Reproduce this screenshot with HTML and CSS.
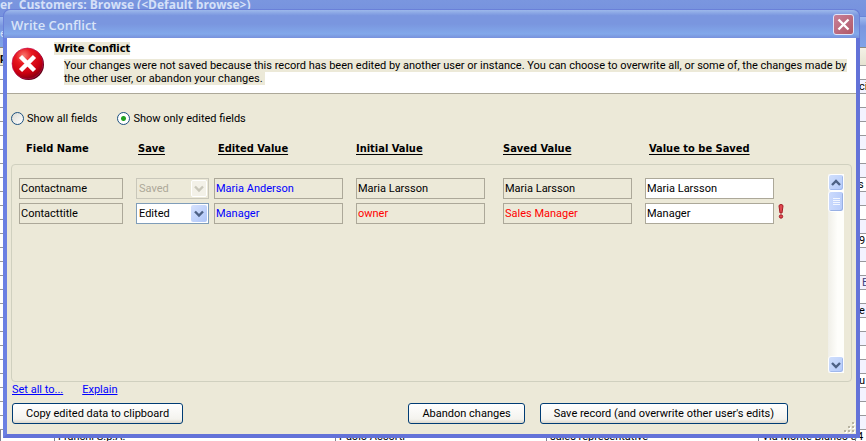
FILE: index.html
```html
<!DOCTYPE html>
<html lang="en">
<head>
<meta charset="utf-8">
<title>Write Conflict</title>
<link rel="stylesheet" href="styles.css">
</head>
<body>
<div class="app">
  <div class="app-title">er&nbsp; Customers: Browse (&lt;Default browse&gt;)</div>
  <div class="app-tools">e</div>
  <div class="sheet">
    <div class="sheet-head">p</div>
    <div class="line"></div>
    <div class="line"><span class="tail">ci</span></div>
    <div class="line"></div>
    <div class="line"></div>
    <div class="line"></div>
    <div class="line"></div>
    <div class="line"></div>
    <div class="line"></div>
    <div class="line"><span class="tail tail-near">s</span></div>
    <div class="line"></div>
    <div class="line"></div>
    <div class="line"></div>
    <div class="line"><span class="tail">9</span></div>
    <div class="line"></div>
    <div class="line"></div>
    <div class="line"><span class="tail tail-far">E</span></div>
    <div class="line"></div>
    <div class="line"><span class="tail">e</span></div>
    <div class="line"></div>
    <div class="line"></div>
    <div class="line"></div>
    <div class="line"></div>
    <div class="line"><span class="tail">u</span></div>
    <div class="line"></div>
    <div class="line"></div>
    <div class="line"></div>
    <div class="line customer"><span></span><span>Franchi S.p.A.</span><span>Paolo Accorti</span><span>sales representative</span><span>Via Monte Bianco 34</span><span></span></div>
  </div>
</div>

<section class="dialog" role="dialog" aria-labelledby="dialog-title">
  <header class="titlebar">
    <h1 id="dialog-title">Write Conflict</h1>
    <button class="close" type="button" aria-label="Close">
      <svg viewBox="0 0 19 19" width="19" height="19"><path d="M4.500 4.500L14.500 14.500M14.500 4.500L4.500 14.500" stroke="#fff" stroke-width="2.400"/></svg>
    </button>
  </header>

  <div class="message">
    <svg class="stop" viewBox="0 0 34 34" width="34" height="34" aria-hidden="true">
      <defs><radialGradient id="ball" cx=".38" cy=".25" r=".75"><stop offset="0" stop-color="#f87a70"/><stop offset=".35" stop-color="#e81820"/><stop offset=".75" stop-color="#cc0010"/><stop offset="1" stop-color="#8a0010"/></radialGradient></defs>
      <circle cx="17.500" cy="17.500" r="15.500" fill="#600010"/>
      <circle cx="16.500" cy="16.500" r="15.500" fill="url(#ball)" stroke="#c01060" stroke-width=".6"/>
      <path d="M9.500 9.500L23.500 23.500M23.500 9.500L9.500 23.500" stroke="#fff" stroke-width="4.500"/>
    </svg>
    <div class="message-text">
      <h2><span class="mark">Write Conflict</span></h2>
      <p><span class="mark">Your changes were not saved because this record has been edited by another user or instance. You can choose to overwrite all, or some of, the changes made by<br>the other user, or abandon your changes.&nbsp; </span></p>
    </div>
  </div>

  <form class="content">
    <div class="filters">
      <label><input type="radio" name="show">Show all fields</label>
      <label><input type="radio" name="show" checked>Show only edited fields</label>
    </div>

    <div class="records">
      <table>
        <thead>
          <tr><th>Field Name</th><th><u>Save</u></th><th><u>Edited Value</u></th><th><u>Initial Value</u></th><th><u>Saved Value</u></th><th><u>Value to be Saved</u></th><th></th></tr>
        </thead>
        <tbody>
          <tr>
            <td><input aria-label="Field name" value="Contactname" readonly></td>
            <td><div class="pick off"><select aria-label="Save Contactname" disabled><option>Saved</option></select><svg viewBox="0 0 16 17" width="16" height="17"><path d="M4 6.500L8 10.500L12 6.500"/></svg></div></td>
            <td><input class="edited" aria-label="Edited value" value="Maria Anderson" readonly></td>
            <td><input aria-label="Initial value" value="Maria Larsson" readonly></td>
            <td><input aria-label="Saved value" value="Maria Larsson" readonly></td>
            <td><input class="open" aria-label="Value to be saved" value="Maria Larsson"></td>
            <td></td>
          </tr>
          <tr>
            <td><input aria-label="Field name" value="Contacttitle" readonly></td>
            <td><div class="pick"><select aria-label="Save Contacttitle"><option>Edited</option><option>Saved</option></select><svg viewBox="0 0 16 17" width="16" height="17"><path d="M4 6.500L8 10.500L12 6.500"/></svg></div></td>
            <td><input class="edited" aria-label="Edited value" value="Manager" readonly></td>
            <td><input class="differs" aria-label="Initial value" value="owner" readonly></td>
            <td><input class="differs" aria-label="Saved value" value="Sales Manager" readonly></td>
            <td><input class="open" aria-label="Value to be saved" value="Manager"></td>
            <td><svg class="alert" viewBox="0 0 6 15" width="6" height="15"><path d="M1 2Q1 .5 3 .5T5 2L4 9H2Z" fill="#e04850" stroke="#a41c24"/><circle cx="3" cy="12.500" r="1.700" fill="#e04850" stroke="#a41c24"/></svg></td>
          </tr>
        </tbody>
      </table>
      <div class="scroll">
        <button type="button" aria-label="Scroll up"><svg viewBox="0 0 14 14" width="14" height="14"><path d="M3 9L7 5L11 9"/></svg></button>
        <div class="thumb"><i></i><i></i><i></i><i></i></div>
        <button class="down" type="button" aria-label="Scroll down"><svg viewBox="0 0 14 14" width="14" height="14"><path d="M3 5L7 9L11 5"/></svg></button>
      </div>
    </div>

    <div class="links"><a href="#set">Set all to...</a><a href="#explain">Explain</a></div>

    <div class="actions">
      <button class="copy" type="button">Copy edited data to clipboard</button>
      <button class="abandon" type="button">Abandon changes</button>
      <button class="save" type="button">Save record (and overwrite other user's edits)</button>
    </div>
  </form>
  <svg class="grip" viewBox="0 0 12 12" width="12" height="12"><path d="M9 1h2v2h-2zM9 5h2v2h-2zM9 9h2v2h-2zM5 5h2v2h-2zM5 9h2v2h-2zM1 9h2v2h-2z" fill="#fff"/><path d="M8 0h2v2h-2zM8 4h2v2h-2zM8 8h2v2h-2zM4 4h2v2h-2zM4 8h2v2h-2zM0 8h2v2h-2z" fill="#b8b4a2"/></svg>
</section>
</body>
</html>
```
FILE: styles.css
```css
* { box-sizing: border-box; }

body {
  margin: 0;
  height: 100vh;
  overflow: hidden;
  position: relative;
  font: 11px/13px Roboto, sans-serif;
  color: #000;
  background: #fff;
}

button, input, select { font: inherit; color: inherit; margin: 0; }

/* window behind the dialog */
.app { height: 100%; overflow: hidden; }

.app-title {
  height: 17px;
  font: bold 12px/10px "Open Sans", sans-serif;
  color: #d5e0f8;
  background: linear-gradient(#7a96df, #7691de);
  border-bottom: 1px solid #6a86d8;
  white-space: nowrap;
}

.app-tools {
  height: 30px;
  padding-top: 10px;
  color: #d5e0f8;
  background: linear-gradient(#a0bcf0, #7a96df 30%, #7fa3e8);
}

.sheet-head {
  height: 19px;
  padding-top: 3px;
  font-weight: bold;
  background: linear-gradient(#f4f2e6, #e6e3d2);
  border-top: 1px solid #8c8a80;
  border-bottom: 1px solid #a0a0a0;
}

.line {
  height: 14px;
  display: flex;
  border-bottom: 1px solid #98989c;
  white-space: nowrap;
}

.line:nth-child(odd) { background: linear-gradient(90deg, #fff 50%, #f3f3ff 50%); }

.tail { margin-left: auto; width: 7px; }
.tail-near { width: 8px; }
.tail-far { color: #404080; width: 4px; }

.customer { display: grid; grid-template-columns: 54fr 281fr 211fr 212fr 97fr 11fr; }
.customer span { min-width: 0; padding-left: 3px; border-left: 1px solid #808090; }

/* dialog */
.dialog {
  position: absolute;
  inset: 9px 6px 3px 3px;
  display: flex;
  flex-direction: column;
  border: 4px solid #6b80e2;
  border-top: 0;
  border-right-color: #6372d8;
  border-bottom-color: #6372d8;
  border-radius: 7px 7px 0 0;
  background: #ece9d8;
}

.titlebar {
  height: 29px;
  flex: none;
  margin: 0 -4px;
  padding: 0 5px 0 7px;
  display: flex;
  align-items: center;
  justify-content: space-between;
  border: 1px solid #6a80d8;
  border-bottom: 0;
  border-radius: 7px 7px 0 0;
  background: linear-gradient(#9db9eb, #7a96df 20%, #7a96df 50%, #82a8ea 85%, #7891dc);
}

h1 {
  margin: 2px 0 0;
  font: 600 13px/18px "Open Sans", sans-serif;
  color: #d8e4f8;
}

.close {
  width: 21px;
  height: 21px;
  padding: 0;
  display: grid;
  place-items: center;
  border: 1px solid #e0e4f8;
  border-radius: 3px;
  background: linear-gradient(135deg, #c88098, #b05868);
}

.message {
  height: 56px;
  flex: none;
  display: flex;
  background: #fff;
  border-bottom: 1px solid #aca899;
}

.stop { flex: none; margin: 9px 0 0 4px; }
.message-text { padding: 4px 0 0 9px; white-space: nowrap; }
h2 { margin: 0; font: bold 11px/14px "DejaVu Sans Condensed", sans-serif; }
p { margin: 3px 0 0 10px; line-height: 13px; }
.mark { background: #ece9d8; }

.content {
  flex: 1;
  display: flex;
  flex-direction: column;
  padding: 17px 4px 10px;
}

.filters { display: flex; gap: 20px; }
.filters label { display: flex; align-items: center; gap: 3px; height: 14px; }

input[type="radio"] {
  appearance: none;
  width: 13px;
  height: 13px;
  border: 1px solid #1c5180;
  border-radius: 50%;
  background: linear-gradient(135deg, #dcdcd4, #fff);
}

input[type="radio"]:checked { background: radial-gradient(circle, #21a121 0 2px, #fff 3px); }

.records {
  flex: 1;
  position: relative;
  display: flex;
  gap: 9px;
  padding: 15px 8px 9px 8px;
}

.records::before {
  content: "";
  position: absolute;
  inset: 39px 0 0 0;
  border: 1px solid #d0d0bf;
  border-radius: 4px;
  pointer-events: none;
}

table { flex: 1; display: block; }
thead, tbody { display: block; }
tr { display: grid; grid-template-columns: 117fr 78fr 142fr 147fr 142fr 129fr 45fr; }
thead { height: 38px; }
tbody tr { height: 25px; }

th {
  padding: 2px 0 0 4px;
  font: bold 11px/14px "DejaVu Sans Condensed", sans-serif;
  text-align: left;
  white-space: nowrap;
}
th:first-child { padding-left: 7px; }
th:nth-child(2) { padding-left: 2px; }
th:nth-child(4), th:nth-child(5) { padding-left: 0; }
u { text-underline-offset: 2px; }

td { padding: 0 13px 0 0; }
td:nth-child(2) { padding-right: 5px; }
td:nth-child(4) { padding-right: 18px; }
td:nth-child(6) { padding: 0; }
td:nth-child(7) { padding: 1px 0 0 4px; }

td input {
  display: block;
  width: 100%;
  height: 21px;
  padding: 1px;
  border: 1px solid #aca899;
  background: #ece9d8;
}

td .open { background: #fff; }
.edited { color: #00f; }
.differs { color: #f00; }

.pick { display: grid; height: 21px; border: 1px solid #7f9db9; background: #fff; }
.pick select, .pick svg { grid-area: 1 / 1; }
.pick select { appearance: none; width: 100%; padding: 0 2px; border: 0; background: none; }
.pick svg {
  justify-self: end;
  align-self: center;
  margin-right: 1px;
  border-radius: 2px;
  background: linear-gradient(135deg, #d6e2fd, #aec5f8);
  pointer-events: none;
}
.pick path, .scroll path { fill: none; stroke: #4d6185; stroke-width: 2.4; }
.off { border-color: #c9c7ba; background: #ece9d8; }
.off select { color: #aca899; opacity: 1; }
.off svg { background: #f3f1e8; outline: 1px solid #fff; outline-offset: -1px; }
.off path { stroke: #c9c7ba; }

.alert { display: block; }

.scroll {
  width: 16px;
  margin-top: 34px;
  display: flex;
  flex-direction: column;
  background: linear-gradient(90deg, #f0efe8, #fefefb 60%);
}

.scroll button {
  width: 16px;
  height: 17px;
  padding: 0;
  display: grid;
  place-items: center;
  border: 1px solid #fff;
  border-radius: 3px;
  background: linear-gradient(135deg, #d0dffc, #b3c9fa);
  box-shadow: inset -1px -1px #a0b8ec;
}

.thumb {
  height: 21px;
  display: flex;
  flex-direction: column;
  align-items: center;
  justify-content: center;
  gap: 1px;
  border: 1px solid #fff;
  border-radius: 3px;
  background: linear-gradient(90deg, #cbdafd, #b8ccfa);
  box-shadow: inset -1px -1px #98b0e4;
}

.thumb i { width: 7px; height: 1px; background: #f2f6ff; }
.scroll .down { margin-top: auto; }

.links { display: flex; gap: 19px; margin: 1px 0 7px; padding-left: 1px; line-height: 13px; }
.links a { color: #00f; text-underline-offset: 1px; }

.actions { display: flex; gap: 15px; padding: 0 64px 0 1px; }

.actions button {
  height: 21px;
  padding: 0 13px;
  border: 1px solid #003c74;
  border-radius: 3px;
  background: linear-gradient(#fff, #f4f3ee 80%, #dcd8cc);
  white-space: nowrap;
}

.actions .abandon { margin-left: auto; }

.grip { position: absolute; right: 0; bottom: 0; }
```
